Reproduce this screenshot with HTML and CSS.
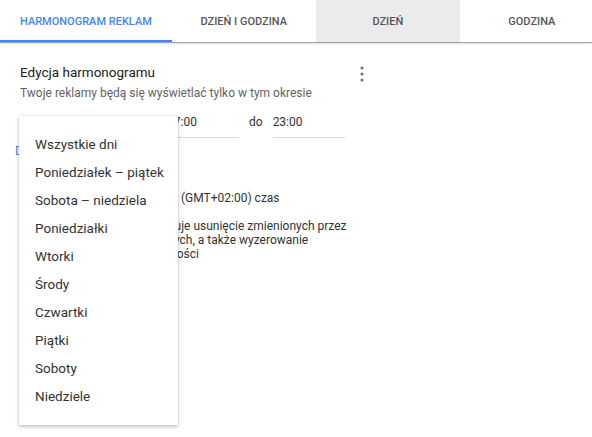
FILE: index.html
```html
<!DOCTYPE html>
<html lang="pl">
<head>
<meta charset="utf-8">
<title>Harmonogram reklam</title>
<link rel="stylesheet" href="styles.css">
</head>
<body>
<nav class="tabs">
  <div class="tab active">Harmonogram reklam</div>
  <div class="tab">Dzień i godzina</div>
  <div class="tab hovered">Dzień</div>
  <div class="tab">Godzina</div>
</nav>

<main class="panel">
  <div class="panel-head">
    <div>
      <h1 class="title">Edycja harmonogramu</h1>
      <p class="subtitle">Twoje reklamy będą się wyświetlać tylko w tym okresie</p>
    </div>
    <button class="more" aria-label="Więcej">
      <svg width="6" height="18" viewBox="0 0 6 18"><circle cx="3" cy="3" r="1.6"/><circle cx="3" cy="9" r="1.6"/><circle cx="3" cy="15" r="1.6"/></svg>
    </button>
  </div>

  <div class="time-row">
    <div class="select" aria-label="Wszystkie dni"></div>
    <div class="input">07:00</div>
    <span class="to">do</span>
    <div class="input">23:00</div>
  </div>

  <a class="add-link">Dodaj</a>

  <div class="tz"><span class="tz-label">Strefa czasowa:</span><span>(GMT+02:00) czas</span></div>

  <p class="note">Nowa strefa czasowa powoduje usunięcie zmienionych przez<br>Ciebie godzin niestandardowych, a także wyzerowanie<br>zebranych danych o skuteczności</p>
</main>

<ul class="menu">
  <li>Wszystkie dni</li>
  <li>Poniedziałek – piątek</li>
  <li>Sobota – niedziela</li>
  <li>Poniedziałki</li>
  <li>Wtorki</li>
  <li>Środy</li>
  <li>Czwartki</li>
  <li>Piątki</li>
  <li>Soboty</li>
  <li>Niedziele</li>
</ul>
</body>
</html>
```

FILE: styles.css
```css
* { box-sizing: border-box; }

body {
  margin: 0;
  font-family: Roboto, "Noto Sans", "Liberation Sans", sans-serif;
  background: #fff;
  color: #333;
}

.tabs {
  display: flex;
  height: 43px;
  overflow: hidden;
  border-bottom: 1px solid #a0a0a0;
  box-shadow: 0 1px 2px rgba(0, 0, 0, 0.12);
}

.tab {
  flex: none;
  min-width: 144px;
  height: 42px;
  padding: 0 20px;
  display: flex;
  align-items: center;
  justify-content: center;
  font-size: 11px;
  font-weight: 500;
  text-transform: uppercase;
  color: #555;
}

.tab.active {
  color: #4285f4;
  box-shadow: inset 0 -2px 0 #4285f4;
}

.tab.hovered { background: #ebebeb; }

.panel {
  width: 372px;
  padding: 19px 0 0 20px;
}

.panel-head {
  display: flex;
  justify-content: space-between;
  align-items: flex-start;
}

.title {
  margin: 0;
  font-size: 13.5px;
  font-weight: 400;
  line-height: 20px;
  color: #202124;
}

.subtitle {
  margin: 3px 0 0;
  font-size: 12px;
  line-height: 16px;
  color: #5f6368;
}

.more {
  border: 0;
  background: none;
  padding: 0;
  margin: 3px 7px 0 0;
  width: 6px;
  height: 18px;
  display: flex;
}
.more svg { fill: #757575; }

.time-row {
  display: flex;
  align-items: flex-start;
  margin-top: 9px;
  font-size: 12px;
  color: #333;
}

.select {
  width: 135px;
  height: 28px;
  margin-right: 12px;
}

.input {
  width: 72px;
  height: 28px;
  line-height: 24px;
  border-bottom: 1px solid #dadada;
}

.to {
  margin: 0 10px;
  line-height: 24px;
}

.add-link {
  display: block;
  margin: 5px 0 0 -5px;
  font-size: 12px;
  color: #4285f4;
  line-height: 16px;
}

.tz {
  display: flex;
  margin-top: 32px;
  font-size: 12px;
  line-height: 14px;
  color: #333;
}

.tz-label {
  flex: none;
  width: 161px;
}

.note {
  margin: 14px 0 0;
  font-size: 12px;
  line-height: 14px;
  color: #333;
}

.menu {
  position: absolute;
  left: 19px;
  top: 116px;
  width: 159px;
  margin: 0;
  padding: 14px 0 15px;
  list-style: none;
  background: #fff;
  box-shadow: 0 2px 4px rgba(0, 0, 0, 0.22), 0 0 2px rgba(0, 0, 0, 0.12);
}

.menu li {
  height: 28px;
  line-height: 28px;
  padding-left: 16px;
  font-size: 13.5px;
  color: #333;
  white-space: nowrap;
}
```
